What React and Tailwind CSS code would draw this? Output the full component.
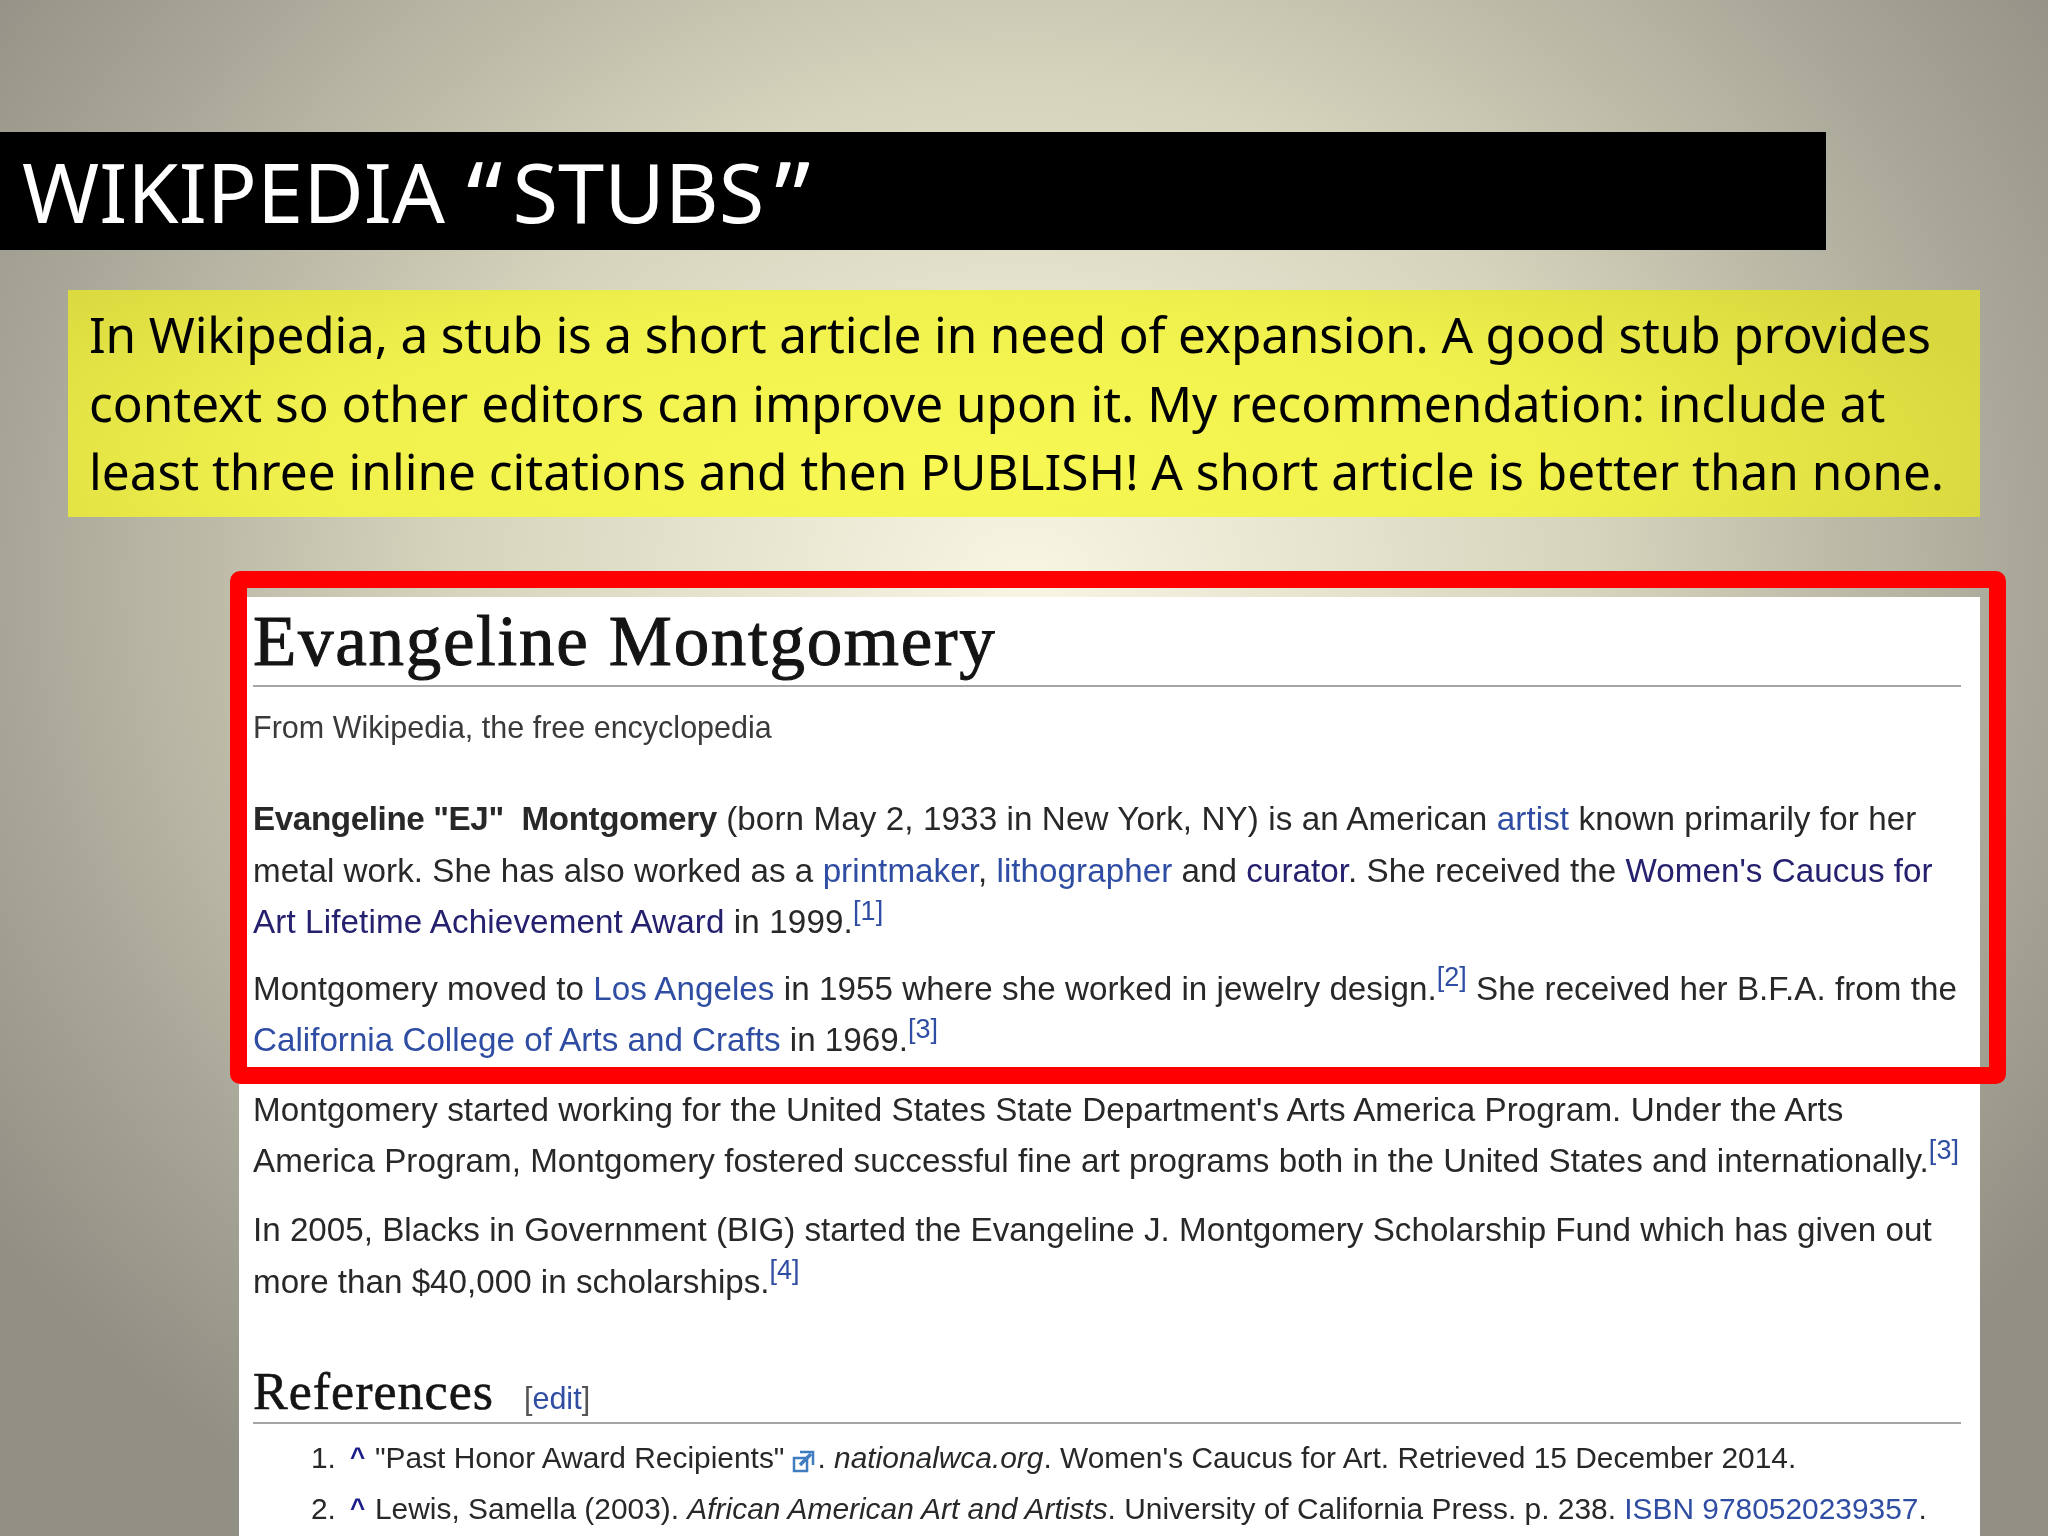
const Link = ({ children }) => <span className="text-[#2f4da3]">{children}</span>;
const Visited = ({ children }) => <span className="text-[#25216f]">{children}</span>;
const Cite = ({ n }) => <sup className="text-[27px] text-[#2f4da3]">[{n}]</sup>;

const Line = ({ className = '', children }) => (
  <div className={`h-[51.5px] leading-[51.5px] whitespace-nowrap ${className}`}>{children}</div>
);

const ExternalIcon = () => (
  <svg className="inline-block ml-[8px] mr-[1px] align-[-5px]" width="24" height="24" viewBox="0 0 24 24" fill="none" stroke="#3f7cc0" strokeWidth="2.5">
    <rect x="2" y="9" width="13" height="13" />
    <path d="M8 3h13v13" />
    <path d="M19 5 8 16" strokeWidth="3.5" />
  </svg>
);

const RefRow = ({ num, children }) => (
  <div className="flex h-[51px] leading-[51px] whitespace-nowrap">
    <span className="w-[39px] pl-[58px] box-content">{num}</span>
    <span className="w-[25px] text-[#1b1b8a] font-bold text-[26px]">^</span>
    <span>{children}</span>
  </div>
);

export default function App() {
  return (
    <div className="relative w-[2048px] h-[1536px] overflow-hidden pt-[132px] bg-[radial-gradient(ellipse_62%_72%_at_50%_38%,#f8f5e3_0%,#d6d4bc_45%,#a8a697_80%,#929084_100%)]">
      <div className="w-[1826px] h-[118px] bg-black pl-[22px] text-white text-[83px] leading-[118px] font-['Noto_Sans',sans-serif] whitespace-nowrap">
        WIKIPEDIA <span className="text-[100px] leading-[0] align-[-11px] pr-[10px]">“</span>STUBS<span className="text-[100px] leading-[0] align-[-11px] pl-[10px]">”</span>
      </div>

      <div className="ml-[68px] mt-[40px] w-[1912px] h-[227px] pl-[21px] pt-[10px] text-[49.5px] leading-[68.5px] text-black whitespace-nowrap font-['Noto_Sans',sans-serif] bg-[radial-gradient(ellipse_58%_130%_at_45%_75%,#f8f855_0%,#f1f14e_55%,#d8d83e_100%)]">
        <div className="tracking-[-0.16px]">In Wikipedia, a stub is a short article in need of expansion. A good stub provides</div>
        <div>context so other editors can improve upon it. My recommendation: include at</div>
        <div>least three inline citations and then PUBLISH! A short article is better than none.</div>
      </div>

      <div className="relative ml-[239px] mt-[80px] w-[1741px] h-[939px] bg-white">
        <div className="pl-[14px] pr-[19px] text-[33.2px] text-[#282828] font-['Liberation_Sans',Arial,sans-serif] blur-[0.5px]">
          <div className="pt-[3px] h-[90px] border-b-2 border-[#a6a6a6] font-['Liberation_Serif',serif] text-[71px] tracking-[1.7px] [-webkit-text-stroke:1px_#141414] leading-[82px] text-[#141414] whitespace-nowrap">
            Evangeline Montgomery
          </div>
          <div className="mt-[14px] text-[30.5px] leading-[52px] text-[#3a3a3a]">From Wikipedia, the free encyclopedia</div>

          <Line className="mt-[40px] tracking-[0.1px]">
            <b className="tracking-[-0.38px]">Evangeline "EJ" &nbsp;Montgomery</b> (born May 2, 1933 in New York, NY) is an American <Link>artist</Link> known primarily for her
          </Line>
          <Line className="tracking-[0.04px]">
            metal work. She has also worked as a <Link>printmaker</Link>, <Link>lithographer</Link> and <Visited>curator</Visited>. She received the <Visited>Women's Caucus for</Visited>
          </Line>
          <Line className="tracking-[0.12px]">
            <Visited>Art Lifetime Achievement Award</Visited> in 1999.<Cite n="1" />
          </Line>

          <Line className="mt-[15px] tracking-[0.04px]">
            Montgomery moved to <Link>Los Angeles</Link> in 1955 where she worked in jewelry design.<Cite n="2" /> She received her B.F.A. from the
          </Line>
          <Line>
            <Link>California College of Arts and Crafts</Link> in 1969.<Cite n="3" />
          </Line>

          <Line className="mt-[18px] tracking-[0.05px]">
            Montgomery started working for the United States State Department's Arts America Program. Under the Arts
          </Line>
          <Line className="tracking-[0.03px]">
            America Program, Montgomery fostered successful fine art programs both in the United States and internationally.<Cite n="3" />
          </Line>

          <Line className="mt-[17.5px]">
            In 2005, Blacks in Government (BIG) started the Evangeline J. Montgomery Scholarship Fund which has given out
          </Line>
          <Line>
            more than $40,000 in scholarships.<Cite n="4" />
          </Line>

          <div className="mt-[57px] h-[60px] border-b-2 border-[#a6a6a6] whitespace-nowrap flex items-baseline">
            <span className="font-['Liberation_Serif',serif] text-[52px] tracking-[1px] [-webkit-text-stroke:0.6px_#141414] leading-[56px] text-[#141414]">References</span>
            <span className="ml-[30px] text-[30.5px]"><span className="text-[#555]">[</span><Link>edit</Link><span className="text-[#555]">]</span></span>
          </div>

          <div className="mt-[8px] text-[29.9px]">
            <RefRow num="1.">
              "Past Honor Award Recipients"<ExternalIcon />. <i>nationalwca.org</i>. Women's Caucus for Art. Retrieved 15 December 2014.
            </RefRow>
            <RefRow num="2.">
              Lewis, Samella (2003). <i>African American Art and Artists</i>. University of California Press. p. 238. <Link>ISBN 9780520239357</Link>.
            </RefRow>
          </div>
        </div>

        {/* red highlight drawn over the top of the article screenshot */}
        <div className="absolute left-[-9px] top-[-26px] w-[1776px] h-[513px] rounded-[10px] border-[17px] border-[#ff0000] pointer-events-none" />
      </div>
    </div>
  );
}
